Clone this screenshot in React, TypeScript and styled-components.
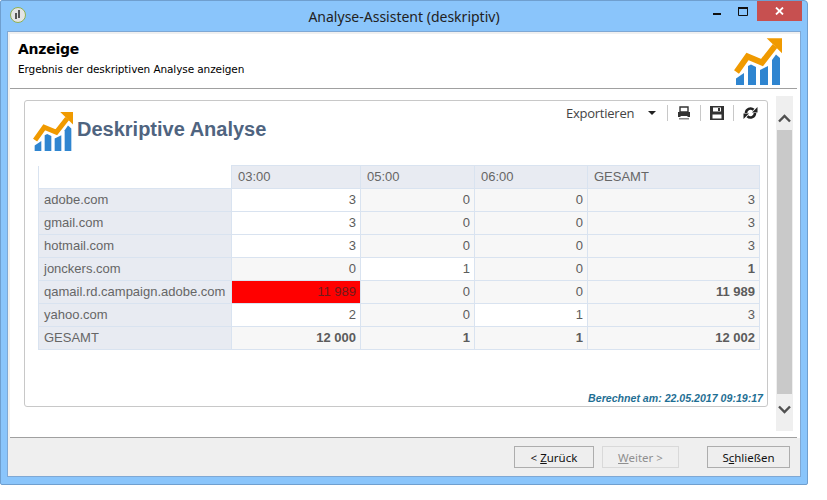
import React from "react";
import styled, { createGlobalStyle } from "styled-components";

const Global = createGlobalStyle`
  html, body { margin: 0; padding: 0; background: #fff; width: 827px; height: 500px; overflow: hidden; }
`;

const Win = styled.div`
  width: 808px; height: 485px; box-sizing: border-box;
  background: #8ac5fb; border: 1px solid #6f9fcf; border-radius: 2px 4px 2px 2px;
  display: flex; flex-direction: column; padding: 0 6px 7px 6px;
`;
const TitleBar = styled.div`
  height: 30px; flex: none; position: relative; display: flex; align-items: center; justify-content: center;
  font: 14px "Noto Sans", sans-serif; color: #222;
`;
const AppIcon = styled.svg`position: absolute; left: 3px; top: 6px;`;
const WinBtns = styled.div`position: absolute; right: -1px; top: 0; display: flex; align-items: flex-start;`;
const WinBtn = styled.div`width: 27px; height: 20px; box-sizing: border-box; display: flex; align-items: center; justify-content: center;`;
const MinBtn = styled(WinBtn)`padding-top: 6px;`;
const CloseBtn = styled.div`width: 45px; height: 20px; background: #c75050; display: flex; align-items: center; justify-content: center;`;
const Client = styled.div`
  flex: 1; min-height: 0; background: #fff; border: 1px solid #7fa8d4; display: flex; flex-direction: column;
  box-shadow: inset 2px 2px 0 #f0f0f0;
`;
const Header = styled.div`
  height: 56px; flex: none; display: flex; justify-content: space-between; padding: 0 15px 0 8px; margin: 0 3px 0 2px;
  border-bottom: 1px solid #a0a0a0;
`;
const HeadText = styled.div`padding-top: 9px; display: flex; flex-direction: column;`;
const HeadTitle = styled.div`font: bold 14px "DejaVu Sans", sans-serif; letter-spacing: -0.25px; color: #000; line-height: 17px;`;
const HeadSub = styled.div`font: 10.5px "DejaVu Sans", sans-serif; letter-spacing: -0.1px; color: #000; line-height: 14px; margin-top: 4px;`;
const HeadLogo = styled.div`padding-top: 5px;`;
const Middle = styled.div`
  flex: 1; min-height: 0; display: flex; align-items: flex-start; padding: 7px 8px 0 16px; gap: 8px;
`;
const Panel = styled.div`
  width: 744px; height: 307px; margin-top: 4px; flex: none; box-sizing: border-box; background: #fff;
  border: 1px solid #c8c8c8; border-radius: 3px; display: flex; flex-direction: column; position: relative;
  padding: 0 8px 0 13px;
`;
const PanelTop = styled.div`height: 64px; flex: none; position: relative; display: flex; align-items: flex-start;`;
const Brand = styled.div`display: flex; align-items: flex-start; margin-left: -5px; padding-top: 10px; gap: 4px;`;
const BrandTitle = styled.div`font: bold 20px "Liberation Sans", sans-serif; color: #4f6480; margin-top: 6px; line-height: 24px;`;
const Tools = styled.div`position: absolute; right: -7px; top: 0; height: 24px; display: flex; align-items: center;`;
const Export = styled.div`font: 13px "Open Sans", sans-serif; color: #444; width: 101px; display: flex; justify-content: space-between; align-items: center; padding-right: 11px; box-sizing: border-box; letter-spacing: -0.25px;`;
const Caret = styled.span`width: 0; height: 0; border: 4px solid transparent; border-top: 4px solid #222; border-bottom: 0;`;
const ToolSep = styled.span`width: 1px; height: 16px; background: #c8c8c8; flex: none;`;
const ToolBtn = styled.span`width: 32px; display: flex; justify-content: center; align-items: center; flex: none;`;
const Grid = styled.table`
  border-collapse: collapse; table-layout: fixed; width: 721px; font: 13px "Liberation Sans", sans-serif; color: #666;
`;
const Th = styled.th`
  background: #e8ebf2; border: 1px solid #d9e3f0; height: 23px; padding: 0 5px 1px 6px; text-align: left; font-weight: normal; box-sizing: border-box;
`;
const Blank = styled.th`border: 1px solid #d9e3f0; background: #fff; border-top-color: #fff;`;
const RowHead = styled.td`
  background: #e8ebf2; border: 1px solid #d9e3f0; height: 23px; padding: 0 5px 1px; white-space: nowrap; box-sizing: border-box;
`;
const Cell = styled.td<{ $bg: "w" | "g" | "r"; $bold?: boolean }>`
  background: ${p => (p.$bg === "w" ? "#fff" : p.$bg === "r" ? "#ff0000" : "#f7f7f7")};
  color: ${p => (p.$bg === "r" ? "#701c1c" : "#5c5c5c")};
  font-weight: ${p => (p.$bold ? "bold" : "normal")};
  border: 1px solid #d9e3f0; height: 23px; padding: 0 4px 1px; text-align: right; box-sizing: border-box;
`;
const Stamp = styled.div`
  position: absolute; right: 4px; bottom: 1px; font: italic bold 10.6px "Liberation Sans", sans-serif; color: #1f6f94; line-height: 13px;
`;
const Scroll = styled.div`
  width: 17px; height: 335px; flex: none; background: #efefef; display: flex; flex-direction: column; align-items: center;
`;
const ScrollEnd = styled.div<{ $up?: boolean }>`
  height: ${p => (p.$up ? 34 : 37)}px; box-sizing: border-box; width: 17px; display: flex; align-items: center; justify-content: center; flex: none;
  padding: ${p => (p.$up ? "10px 0 0" : "0 0 7px")};
`;
const Thumb = styled.div`flex: 1; width: 15px; background: #c9c9c9;`;
const Rule = styled.div`height: 1px; flex: none; background: #a0a0a0; margin: 0 3px 0 2px;`;
const Footer = styled.div`
  height: 38px; flex: none; box-sizing: border-box; background: #efefef; display: flex; align-items: flex-start; justify-content: flex-end;
  padding: 8px 10px 0 0; gap: 28px;
`;
const Pair = styled.div`display: flex; gap: 8px;`;
const Btn = styled.div<{ $off?: boolean; $w: number }>`
  width: ${p => p.$w}px; height: 22px; box-sizing: border-box; display: flex; align-items: center; justify-content: center;
  border: 1px solid ${p => (p.$off ? "#d9d9d9" : "#adadad")}; background: ${p => (p.$off ? "#efefef" : "#eeeeee")};
  color: ${p => (p.$off ? "#8f8f8f" : "#111")}; font: 11.5px "Noto Sans", sans-serif;
  u { text-underline-offset: 1px; }
`;

const Logo = ({ size }: { size: number }) => (
  <svg width={size} height={size} viewBox="0 0 48 48">
    <g fill="#2f85d0">
      <polygon points="2,41.5 10,36 10,48 2,48" />
      <polygon points="14,29 17,27.5 22,30 22,48 14,48" />
      <polygon points="26,33 34,29 34,48 26,48" />
      <polygon points="38,23 42,17.5 46,21 46,48 38,48" />
    </g>
    <polyline points="2.5,35 13.5,19.5 28,25.5 41,9" fill="none" stroke="#f09a00" strokeWidth="6" />
    <polygon points="32.7,1.3 48,1.3 48,16.3" fill="#f09a00" />
  </svg>
);

const Printer = () => (
  <svg width="14" height="14" viewBox="0 0 14 14">
    <path d="M3 1h8v5H3z" fill="none" stroke="#333" strokeWidth="1.4" />
    <path d="M1 6h12v5H1z" fill="#333" />
    <path d="M2 12h10v1.5H2z" fill="#888" />
    <path d="M3.5 10h7v1h-7z" fill="#fff" />
  </svg>
);
const Floppy = () => (
  <svg width="14" height="14" viewBox="0 0 14 14">
    <path d="M0 0h14v14H0z" fill="#333" />
    <path d="M3 1.5h8v4H3z" fill="#fff" />
    <path d="M8 2h2v3H8z" fill="#333" />
    <path d="M2.5 8.5h9v4h-9z" fill="#fff" />
  </svg>
);
const Refresh = () => (
  <svg width="15" height="14" viewBox="0 0 15 14">
    <path d="M3 7A4.5 4.5 0 0 1 10.6 3.8" fill="none" stroke="#222" strokeWidth="2.6" />
    <path d="M9 6.6h5.5V1z" fill="#222" />
    <path d="M12 7A4.5 4.5 0 0 1 4.4 10.2" fill="none" stroke="#222" strokeWidth="2.6" />
    <path d="M6 7.4H.5V13z" fill="#222" />
  </svg>
);
const Chevron = ({ up }: { up?: boolean }) => (
  <svg width="13" height="9" viewBox="0 0 13 9">
    <polyline points={up ? "1,7.5 6.5,2 12,7.5" : "1,1.5 6.5,7 12,1.5"} fill="none" stroke="#505050" strokeWidth="2.4" />
  </svg>
);

type C = [string, "w" | "g" | "r", boolean?];
const rows: { name: string; cells: C[] }[] = [
  { name: "adobe.com", cells: [["3", "w"], ["0", "g"], ["0", "g"], ["3", "g"]] },
  { name: "gmail.com", cells: [["3", "w"], ["0", "g"], ["0", "g"], ["3", "g"]] },
  { name: "hotmail.com", cells: [["3", "w"], ["0", "g"], ["0", "g"], ["3", "g"]] },
  { name: "jonckers.com", cells: [["0", "g"], ["1", "w"], ["0", "g"], ["1", "g", true]] },
  { name: "qamail.rd.campaign.adobe.com", cells: [["11 989", "r"], ["0", "g"], ["0", "g"], ["11 989", "g", true]] },
  { name: "yahoo.com", cells: [["2", "w"], ["0", "g"], ["1", "w"], ["3", "g"]] },
  { name: "GESAMT", cells: [["12 000", "g", true], ["1", "g", true], ["1", "g", true], ["12 002", "g", true]] },
];

export default function App() {
  return (
    <Win>
      <Global />
      <TitleBar>
        <AppIcon width="16" height="16" viewBox="0 0 16 16">
          <circle cx="8" cy="8" r="7.5" fill="#e4e4e4" stroke="#8fb050" />
          <path d="M8 3h2v8H8zM5 6h2v6H5z" fill="#555" />
        </AppIcon>
        Analyse-Assistent (deskriptiv)
        <WinBtns>
          <MinBtn>
            <svg width="8" height="3" viewBox="0 0 8 3"><path d="M0 0h8v2H0z" fill="#111" /></svg>
          </MinBtn>
          <WinBtn>
            <svg width="11" height="9" viewBox="0 0 11 9"><path d="M.5 1.5h9v7h-9z" fill="none" stroke="#111" /><path d="M0 0h10v2H0z" fill="#111" /></svg>
          </WinBtn>
          <CloseBtn>
            <svg width="9" height="8" viewBox="0 0 9 8"><path d="M1 0.5l7 7M8 0.5l-7 7" stroke="#fff" strokeWidth="1.8" /></svg>
          </CloseBtn>
        </WinBtns>
      </TitleBar>
      <Client>
        <Header>
          <HeadText>
            <HeadTitle>Anzeige</HeadTitle>
            <HeadSub>Ergebnis der deskriptiven Analyse anzeigen</HeadSub>
          </HeadText>
          <HeadLogo><Logo size={48} /></HeadLogo>
        </Header>
        <Middle>
          <Panel>
            <PanelTop>
              <Brand>
                <Logo size={40} />
                <BrandTitle>Deskriptive Analyse</BrandTitle>
              </Brand>
              <Tools>
                <Export>Exportieren<Caret /></Export>
                <ToolSep />
                <ToolBtn><Printer /></ToolBtn>
                <ToolSep />
                <ToolBtn><Floppy /></ToolBtn>
                <ToolSep />
                <ToolBtn><Refresh /></ToolBtn>
              </Tools>
            </PanelTop>
            <Grid>
              <colgroup>
                <col style={{ width: 193 }} />
                <col style={{ width: 129 }} />
                <col style={{ width: 114 }} />
                <col style={{ width: 113 }} />
                <col style={{ width: 172 }} />
              </colgroup>
              <thead>
                <tr>
                  <Blank />
                  <Th>03:00</Th><Th>05:00</Th><Th>06:00</Th><Th>GESAMT</Th>
                </tr>
              </thead>
              <tbody>
                {rows.map(r => (
                  <tr key={r.name}>
                    <RowHead>{r.name}</RowHead>
                    {r.cells.map((c, i) => (
                      <Cell key={i} $bg={c[1]} $bold={c[2]}>{c[0]}</Cell>
                    ))}
                  </tr>
                ))}
              </tbody>
            </Grid>
            <Stamp>Berechnet am: 22.05.2017 09:19:17</Stamp>
          </Panel>
          <Scroll>
            <ScrollEnd $up><Chevron up /></ScrollEnd>
            <Thumb />
            <ScrollEnd><Chevron /></ScrollEnd>
          </Scroll>
        </Middle>
        <Rule />
        <Footer>
          <Pair>
            <Btn $w={80}><span>&lt; <u>Z</u>urück</span></Btn>
            <Btn $w={77} $off><span><u>W</u>eiter &gt;</span></Btn>
          </Pair>
          <Btn $w={83}><span>S<u>c</u>hließen</span></Btn>
        </Footer>
      </Client>
    </Win>
  );
}
